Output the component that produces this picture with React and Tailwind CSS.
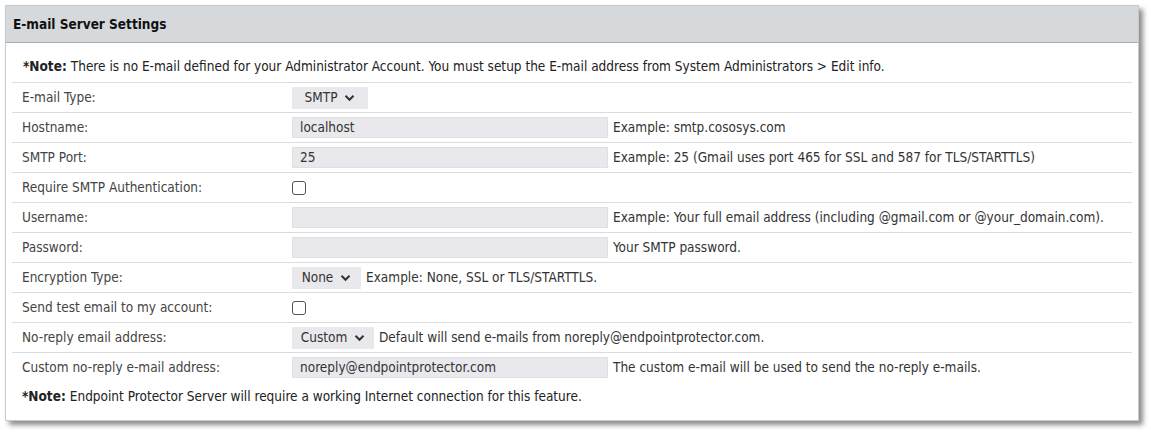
import React from 'react';

const Chevron = () => (
  <svg width="11" height="8" viewBox="0 0 11 8" className="ml-[7px]">
    <path d="M1.5 1.8 L5.5 5.8 L9.5 1.8" fill="none" stroke="#333" strokeWidth="2" />
  </svg>
);

const Select = ({ value, width }) => (
  <div className={`flex items-center justify-center h-[22px] bg-[#e9e9ed] text-[#333] ${width}`}>
    <span>{value}</span>
    <Chevron />
  </div>
);

const Input = ({ value }) => (
  <div className="w-[316px] h-[21px] bg-[#e9e9ed] border border-[#e0e0e4] flex items-center px-[7px] text-[#333]">
    {value}
  </div>
);

const Checkbox = () => (
  <div className="w-[14px] h-[14px] rounded-[3px] border border-[#555] bg-white" />
);

const EmailServerSettings = () => {
  // each row: label, control, hint text
  const rows = [
    { label: 'E-mail Type:', control: <Select value="SMTP" width="w-[76px]" /> },
    { label: 'Hostname:', control: <Input value="localhost" />, hint: 'Example: smtp.cososys.com' },
    {
      label: 'SMTP Port:',
      control: <Input value="25" />,
      hint: 'Example: 25 (Gmail uses port 465 for SSL and 587 for TLS/STARTTLS)'
    },
    { label: 'Require SMTP Authentication:', control: <Checkbox /> },
    {
      label: 'Username:',
      control: <Input value="" />,
      hint: 'Example: Your full email address (including @gmail.com or @your_domain.com).'
    },
    { label: 'Password:', control: <Input value="" />, hint: 'Your SMTP password.' },
    {
      label: 'Encryption Type:',
      control: <Select value="None" width="w-[69px]" />,
      hint: 'Example: None, SSL or TLS/STARTTLS.'
    },
    { label: 'Send test email to my account:', control: <Checkbox /> },
    {
      label: 'No-reply email address:',
      control: <Select value="Custom" width="w-[82px]" />,
      hint: 'Default will send e-mails from noreply@endpointprotector.com.'
    },
    {
      label: 'Custom no-reply e-mail address:',
      control: <Input value="noreply@endpointprotector.com" />,
      hint: 'The custom e-mail will be used to send the no-reply e-mails.',
      last: true
    }
  ];

  return (
    <div className="w-[1151px] h-[437px] bg-white pt-[5px] pl-[5px] font-['DejaVu_Sans_Condensed','DejaVu_Sans',sans-serif] text-[13.5px] text-[#444]">
      <div className="w-[1134px] h-[416px] border border-[#c9c9c9] bg-white shadow-[4px_4px_5px_rgba(0,0,0,0.45)]">
        <div className="h-[37px] bg-[#d6d9dc] border-b border-[#a9adb1] flex items-center px-[7px] font-bold text-[#111]">
          E-mail Server Settings
        </div>

        <div className="px-[6px]">
          <div className="h-[40px] border-b border-[#dcdcdc] flex items-center pl-[11px] pt-[7px] text-[#222]">
            <span className="font-bold mr-[4px]">*Note:</span>
            There is no E-mail defined for your Administrator Account. You must setup the E-mail address from System Administrators &gt; Edit info.
          </div>

          {rows.map((row, index) => (
            <div
              key={index}
              className={`flex items-center pl-[10px] ${row.last ? 'h-[29px]' : 'h-[30px] border-b border-[#dcdcdc]'}`}
            >
              <div className="w-[270px] shrink-0">{row.label}</div>
              {row.control}
              {row.hint && <span className="ml-[5px] text-[#333]">{row.hint}</span>}
            </div>
          ))}

          <div className="h-[29px] flex items-center pl-[10px] text-[#222]">
            <span className="font-bold mr-[4px]">*Note:</span>
            Endpoint Protector Server will require a working Internet connection for this feature.
          </div>
        </div>
      </div>
    </div>
  );
};

export default EmailServerSettings;
